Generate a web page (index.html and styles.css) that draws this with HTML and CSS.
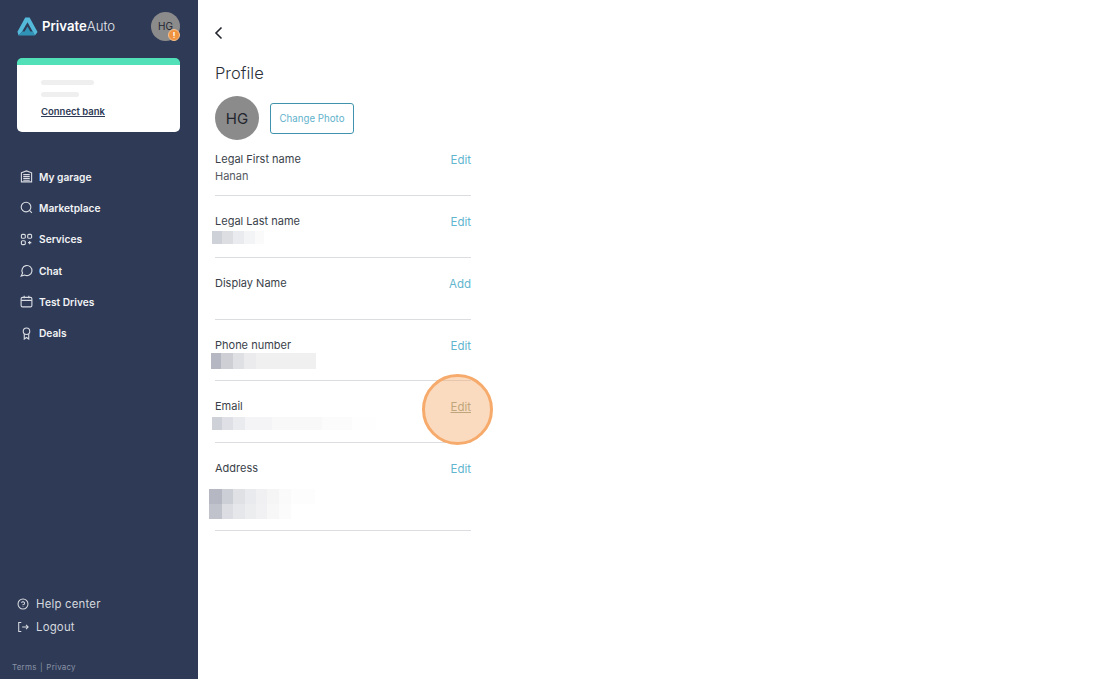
FILE: index.html
```html
<!DOCTYPE html>
<html lang="en">
<head>
    <meta charset="UTF-8">
    <title>PrivateAuto - Profile</title>
    <link rel="stylesheet" href="styles.css">
</head>
<body>
    <aside class="sidebar">
        <div class="top-row">
            <div class="logo">
                <svg class="logo-mark" viewBox="0 0 22 20" width="21" height="19">
                    <path d="M8.600 0.600 L13.200 0.600 L21.600 15.800 L18.800 19.400 L11 5.400 L5.200 15.600 L1.600 19.400 L0.400 15.600 Z" fill="#55b9da"/>
                    <path d="M1.600 19.400 L5.400 15.200 L8 15.200 L11 10 L14 15.200 L16.400 15.200 L18.800 19.400 Z" fill="#2f93b8"/>
                </svg>
                <span class="logo-text"><b>Private</b>Auto</span>
            </div>
            <div class="user-badge">
                HG
                <span class="alert">!</span>
            </div>
        </div>

        <div class="bank-card">
            <div class="card-line long"></div>
            <div class="card-line short"></div>
            <a class="connect">Connect bank</a>
        </div>

        <nav class="nav">
            <a class="nav-item">
                <svg viewBox="0 0 14 14" width="13" height="13"><path d="M1.500 3 L7 1 L12.500 3 V12.800 H1.500 Z M3.500 5 H10.500 M3.500 7 H10.500 M3.500 9 H10.500 M3.500 11 H10.500"/></svg>
                My garage
            </a>
            <a class="nav-item">
                <svg viewBox="0 0 14 14" width="13" height="13"><circle cx="6.500" cy="6.500" r="5.200"/><path d="M10.200 10.200 L12.800 12.800"/></svg>
                Marketplace
            </a>
            <a class="nav-item">
                <svg viewBox="0 0 14 14" width="13" height="13"><rect x="1.500" y="1.500" width="4.200" height="4.200" rx="1.200"/><rect x="8.300" y="1.500" width="4.200" height="4.200" rx="1.200"/><rect x="1.500" y="8.300" width="4.200" height="4.200" rx="1.200"/><path d="M10.400 8.600 V12.200 M8.600 10.400 H12.200"/></svg>
                Services
            </a>
            <a class="nav-item">
                <svg viewBox="0 0 14 14" width="13" height="13"><path d="M1.300 13 L2.800 9.800 A5.400 5.400 0 1 1 5 11.900 Z"/></svg>
                Chat
            </a>
            <a class="nav-item">
                <svg viewBox="0 0 14 14" width="13" height="13"><rect x="1.200" y="2.500" width="11.600" height="10.300" rx="1.500"/><path d="M1.200 5.800 H12.800 M4.500 0.800 V3.500 M9.500 0.800 V3.500"/></svg>
                Test Drives
            </a>
            <a class="nav-item">
                <svg viewBox="0 0 14 14" width="13" height="13"><circle cx="7" cy="4.600" r="3.500"/><path d="M4.600 7.500 V13 L7 11.300 L9.400 13 V7.500"/></svg>
                Deals
            </a>
        </nav>

        <div class="bottom-links">
            <a class="bottom-item">
                <svg viewBox="0 0 14 14"><circle cx="7" cy="7" r="5.800"/><path d="M5.300 5.600 A1.800 1.800 0 1 1 7 8 V8.500 M7 10 V10.500"/></svg>
                Help center
            </a>
            <a class="bottom-item">
                <svg viewBox="0 0 14 14"><path d="M5 1.800 H2 V12.200 H5 M6 7 H13 M10.500 4.500 L13 7 L10.500 9.500"/></svg>
                Logout
            </a>
        </div>

        <div class="legal">Terms <span class="sep">|</span> Privacy</div>
    </aside>

    <main class="content">
        <svg class="back" viewBox="0 0 10 14" width="10" height="14"><path d="M7.500 1.500 L2 7 L7.500 12.500"/></svg>
        <h1 class="title">Profile</h1>

        <div class="photo-row">
            <div class="avatar">HG</div>
            <button class="change-photo">Change Photo</button>
        </div>

        <section class="fields">
            <div class="field field-first">
                <div>
                    <div class="label">Legal First name</div>
                    <div class="value">Hanan</div>
                </div>
                <a class="action">Edit</a>
            </div>
            <div class="field">
                <div>
                    <div class="label">Legal Last name</div>
                    <div class="blur blur-last"></div>
                </div>
                <a class="action">Edit</a>
            </div>
            <div class="field">
                <div>
                    <div class="label">Display Name</div>
                </div>
                <a class="action">Add</a>
            </div>
            <div class="field">
                <div>
                    <div class="label">Phone number</div>
                    <div class="blur blur-phone"></div>
                </div>
                <a class="action">Edit</a>
            </div>
            <div class="field">
                <div>
                    <div class="label">Email</div>
                    <div class="blur blur-email"></div>
                </div>
                <a class="action highlighted">Edit</a>
            </div>
            <div class="field field-address">
                <div>
                    <div class="label">Address</div>
                    <div class="blur blur-address"></div>
                </div>
                <a class="action">Edit</a>
            </div>
        </section>
    </main>
</body>
</html>
```

FILE: styles.css
```css
* {
    box-sizing: border-box;
}

body {
    margin: 0;
    height: 679px;
    overflow: hidden;
    display: flex;
    font-family: 'Inter', sans-serif;
    background-color: #ffffff;
    color: #3a3f4a;
}

/* sidebar */
.sidebar {
    width: 198px;
    height: 679px;
    flex-shrink: 0;
    background-color: #2e3a56;
    color: #ffffff;
    display: flex;
    flex-direction: column;
    padding: 11px 18px 0 17px;
}

.top-row {
    display: flex;
    justify-content: space-between;
    align-items: center;
    height: 30px;
}

.logo {
    display: flex;
    align-items: center;
    gap: 4px;
}

.logo-text {
    font-size: 13.200px;
    font-weight: 300;
    color: #e6e9ee;
}

.logo-text b {
    font-weight: 600;
    color: #ffffff;
}

.user-badge {
    position: relative;
    width: 29px;
    height: 29px;
    border-radius: 50%;
    background-color: #8b8b8b;
    color: #1f2430;
    font-size: 10px;
    display: flex;
    align-items: center;
    justify-content: center;
    padding-bottom: 1px;
}

.alert {
    position: absolute;
    right: 0;
    bottom: 0;
    width: 12px;
    height: 12px;
    border-radius: 50%;
    background-color: #f0933f;
    border: 1px solid #f6c08e;
    color: #ffffff;
    font-size: 8px;
    font-weight: 700;
    line-height: 10px;
    text-align: center;
}

.bank-card {
    margin-top: 17px;
    height: 74px;
    background-color: #ffffff;
    border-top: 7px solid #52e0b8;
    border-radius: 5px;
    padding: 15px 0 0 24px;
}

.card-line {
    height: 5px;
    border-radius: 3px;
    background-color: #efefef;
}

.card-line.long {
    width: 53px;
}

.card-line.short {
    width: 38px;
    margin-top: 7px;
}

.connect {
    display: block;
    margin-top: 8px;
    font-size: 9.500px;
    font-weight: 600;
    line-height: 14px;
    color: #2e3a56;
    text-decoration: underline;
}

.nav {
    margin-top: 29px;
    display: flex;
    flex-direction: column;
}

.nav-item {
    height: 31.300px;
    display: flex;
    align-items: center;
    gap: 6px;
    padding-left: 3px;
    font-size: 10.200px;
    font-weight: 600;
    color: #f2f3f5;
}

.nav-item svg, .bottom-item svg {
    fill: none;
    stroke: #d9dce2;
    stroke-width: 1.200;
    flex-shrink: 0;
}

.bottom-links {
    margin-top: auto;
    display: flex;
    flex-direction: column;
}

.bottom-item {
    height: 23px;
    display: flex;
    align-items: center;
    gap: 7px;
    font-size: 11.400px;
    letter-spacing: 0.2px;
    color: #d5d8de;
}

.bottom-item svg {
    width: 12px;
    height: 12px;
}

.legal {
    margin: 23px 0 6px -5px;
    font-size: 8px;
    letter-spacing: 0.2px;
    line-height: 12px;
    color: #8a92a5;
}

.sep {
    margin: 0 1px;
}

/* main */
.content {
    flex: 1;
    padding: 26px 0 0 17px;
}

.back {
    display: block;
    fill: none;
    stroke: #23262e;
    stroke-width: 1.600;
    margin-left: -1px;
}

.title {
    margin: 20px 0 0 0;
    font-size: 16.500px;
    font-weight: 300;
    line-height: 26px;
    color: #2b2f38;
}

.photo-row {
    margin-top: 10px;
    display: flex;
    align-items: center;
    gap: 11px;
}

.avatar {
    width: 44px;
    height: 44px;
    border-radius: 50%;
    background-color: #8b8b8b;
    color: #23262e;
    font-size: 15px;
    display: flex;
    align-items: center;
    justify-content: center;
}

.change-photo {
    width: 84px;
    height: 31px;
    padding: 0;
    background-color: #ffffff;
    border: 1px solid #3f93ad;
    border-radius: 3px;
    color: #5fb2cc;
    font-family: 'Inter', sans-serif;
    font-size: 9.700px;
}

.fields {
    width: 256px;
    margin-top: 10px;
}

.field {
    height: 61.800px;
    padding-top: 17px;
    display: flex;
    justify-content: space-between;
    align-items: flex-start;
    border-bottom: 1px solid #dcdde0;
}

.field-first {
    height: 46px;
    padding-top: 1px;
}

.field-address {
    height: 88px;
}

.label {
    font-size: 11px;
    line-height: 17px;
    color: #3a3f4a;
}

.value {
    font-size: 11px;
    line-height: 17px;
    color: #55595f;
}

.action {
    margin-top: 1px;
    font-size: 11.500px;
    line-height: 17px;
    color: #62b5cf;
}

.action.highlighted {
    position: relative;
    color: #98a78f;
    text-decoration: underline;
}

.action.highlighted::before {
    content: '';
    box-sizing: border-box;
    position: absolute;
    left: -28px;
    top: -25px;
    width: 71px;
    height: 71px;
    border-radius: 50%;
    background-color: rgba(246, 164, 96, 0.4);
    border: 3px solid #f6ab6c;
}

.blur {
    margin-left: -3px;
    background-repeat: no-repeat;
}

.blur-last {
    width: 52px;
    height: 13px;
    margin-top: 1px;
    background-image: linear-gradient(to right, #cfd1d8 0 10px, #dcdee2 10px 21px, #eaebee 21px 32px, #f3f4f5 32px 43px, #fafafb 43px 52px);
}

.blur-phone {
    width: 105px;
    height: 16px;
    margin-top: -1px;
    margin-left: -4px;
    background-image: linear-gradient(to right, #b5b8c2 0 10px, #cdcfd5 10px 22px, #dfe0e3 22px 33px, #ebebed 33px 45px, #f0f0f1 45px 105px);
}

.blur-email {
    width: 164px;
    height: 13px;
    margin-top: 2px;
    background-image: linear-gradient(to right, #cfd1d8 0 10px, #dfe0e6 10px 21px, #eaebee 21px 33px, #f4f4f6 33px 60px, #f8f8f9 60px 110px, #fbfbfc 110px 140px, #fefefe 140px 164px);
}

.blur-address {
    width: 106px;
    height: 30px;
    margin: 12px 0 0 -6px;
    background-size: 100% 15px;
    background-position: 0 0, 0 15px;
    background-image:
        linear-gradient(to right, #b5b8c2 0 13px, #cdcfd6 13px 24px, #e0e1e5 24px 36px, #e9eaed 36px 47px, #f0f0f2 47px 58px, #f5f5f6 58px 70px, #fafafa 70px 82px, #fdfdfd 82px 106px),
        linear-gradient(to right, #c0c2cc 0 13px, #dcdde3 13px 24px, #e6e7ea 24px 36px, #ecedef 36px 47px, #f1f1f3 47px 58px, #f7f7f8 58px 70px, #fbfbfc 70px 82px, #ffffff 82px 106px);
}
```
